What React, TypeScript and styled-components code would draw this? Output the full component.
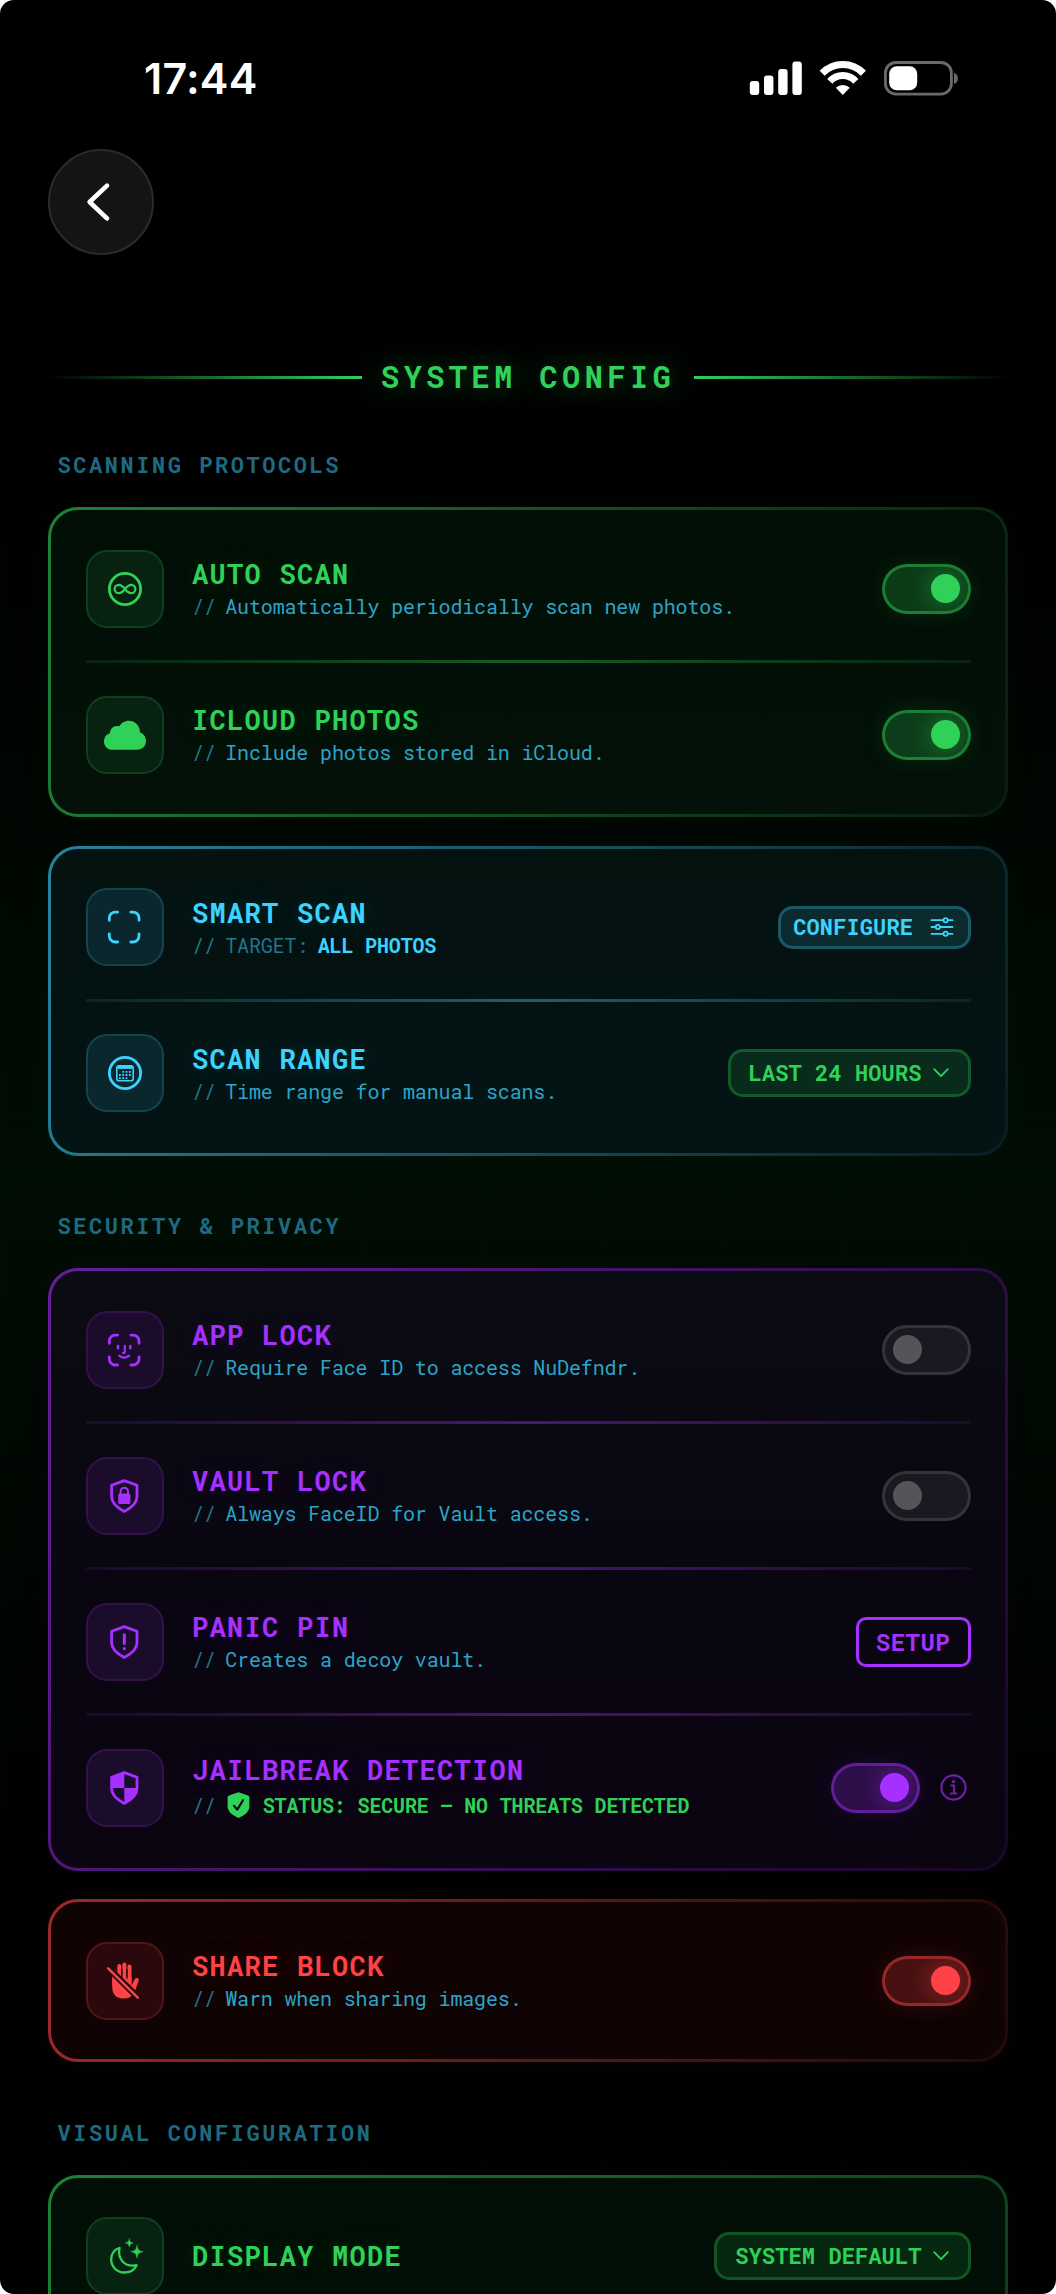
import React from "react";
import styled, { createGlobalStyle } from "styled-components";

type Tone = "green" | "cyan" | "purple" | "red";

interface Palette {
  ink: string;
  rgb: string;
  fill: string;
  tile: string;
  tileEdge: string;
}

const tones: Record<Tone, Palette> = {
  green: {
    ink: "#30d158",
    rgb: "48, 209, 88",
    fill: "linear-gradient(180deg, #010e05, #031108)",
    tile: "#072210",
    tileEdge: "#0e3f1e",
  },
  cyan: {
    ink: "#3cd3fe",
    rgb: "60, 211, 254",
    fill: "linear-gradient(180deg, #03120f, #031415)",
    tile: "#0a272d",
    tileEdge: "#144450",
  },
  purple: {
    ink: "#a530ff",
    rgb: "165, 48, 255",
    fill: "linear-gradient(180deg, #0b0c13, #090611 50%, #0b0411)",
    tile: "#1b0c2b",
    tileEdge: "#331149",
  },
  red: {
    ink: "#ff4245",
    rgb: "255, 66, 69",
    fill: "linear-gradient(180deg, #100303, #100303)",
    tile: "#2b080b",
    tileEdge: "#541518",
  },
};

const mono = `"Roboto Mono", "Liberation Mono", "DejaVu Sans Mono", monospace`;

const GlobalStyle = createGlobalStyle`
  *, *::before, *::after { box-sizing: border-box; }
  html, body { margin: 0; padding: 0; background: #fff; }
`;

const Screen = styled.main`
  width: 1056px;
  height: 2294px;
  overflow: hidden;
  border-radius: 14px;
  padding: 0 48px;
  font-family: ${mono};
  background:
    repeating-linear-gradient(90deg, rgba(48, 209, 88, 0.012) 0 1px, transparent 1px 120px),
    repeating-linear-gradient(180deg, rgba(48, 209, 88, 0.012) 0 1px, transparent 1px 120px) 0 38px,
    linear-gradient(180deg, #000 0, #000 500px, #000d03 1180px, #000b03 1290px, #000 1850px);
`;

const StatusBar = styled.header`
  height: 148.5px;
  padding: 7px 49.5px 0 96px;
  display: flex;
  align-items: center;
  justify-content: space-between;
  color: #fff;
`;

const Clock = styled.span`
  font-family: Inter, "Liberation Sans", sans-serif;
  font-weight: 600;
  font-size: 43px;
  letter-spacing: 0.2px;
`;

const BackButton = styled.button`
  display: flex;
  align-items: center;
  justify-content: center;
  width: 106px;
  height: 106px;
  padding: 0 6px 0 0;
  border-radius: 50%;
  border: 2px solid #2b2b2f;
  background: #141414;
`;

const TitleRow = styled.div`
  display: flex;
  align-items: center;
  height: 30.5px;
  margin: 106.5px 0 3px;
`;

const Rule = styled.span<{ $side: "left" | "right" }>`
  flex: 1;
  height: 3px;
  margin-top: 2px;
  background: linear-gradient(to ${(p) => p.$side}, #30d158, transparent);
`;

const PageTitle = styled.h1`
  margin: 0;
  padding: 0 18.5px 0 18.5px;
  font-size: 30.5px;
  line-height: 30px;
  font-weight: 700;
  letter-spacing: 4.35px;
  color: #30d158;
  text-shadow: 0 0 30px rgba(48, 209, 88, 0.5);
`;

const SectionLabel = styled.h2`
  margin: 0;
  padding: 55.5px 0 27px 9.5px;
  font-size: 22px;
  line-height: 30px;
  font-weight: 700;
  letter-spacing: 2.55px;
  color: #1e6a80;
`;

const Card = styled.section<{ $tone: Tone; $angle: number; $height: number }>`
  display: flex;
  flex-direction: column;
  gap: 32.3px;
  height: ${(p) => p.$height}px;
  padding: 39.3px 34.5px 39px 35px;
  border: 3px solid transparent;
  border-radius: 30px;
  background:
    ${(p) => tones[p.$tone].fill} padding-box,
    linear-gradient(
        ${(p) => p.$angle}deg,
        rgba(${(p) => tones[p.$tone].rgb}, 0.62),
        rgba(${(p) => tones[p.$tone].rgb}, 0.14)
      )
      border-box,
    #000 border-box;
  box-shadow: 0 0 30px rgba(${(p) => tones[p.$tone].rgb}, 0.04);

  & + & {
    margin-top: 28.5px;
  }
`;

const Divider = styled.hr<{ $tone: Tone }>`
  flex: none;
  width: 100%;
  height: 3px;
  margin: 0;
  border: 0;
  background: linear-gradient(
    90deg,
    rgba(${(p) => tones[p.$tone].rgb}, 0.1),
    rgba(${(p) => tones[p.$tone].rgb}, 0.4) 50%,
    rgba(${(p) => tones[p.$tone].rgb}, 0.1)
  );
`;

const Row = styled.div`
  display: flex;
  align-items: center;
  flex: none;
  height: 78.5px;
`;

const Tile = styled.span<{ $tone: Tone }>`
  display: flex;
  align-items: center;
  justify-content: center;
  flex: none;
  width: 78px;
  height: 78px;
  margin-right: 28px;
  border-radius: 21px;
  border: 2px solid ${(p) => tones[p.$tone].tileEdge};
  background: ${(p) => tones[p.$tone].tile};
  color: ${(p) => tones[p.$tone].ink};
`;

const Copy = styled.div<{ $drop: number }>`
  flex: 1;
  margin-top: ${(p) => p.$drop}px;
`;

const RowTitle = styled.h3<{ $tone: Tone }>`
  margin: 0;
  font-size: 27px;
  line-height: 33px;
  font-weight: 700;
  letter-spacing: 1.3px;
  color: ${(p) => tones[p.$tone].ink};
  text-shadow: 0 0 24px rgba(${(p) => tones[p.$tone].rgb}, 0.2);
`;

const Note = styled.p<{ $height?: number }>`
  display: flex;
  align-items: center;
  gap: 9.5px;
  height: ${(p) => p.$height ?? 33}px;
  margin: 0;
  font-size: 20px;
  line-height: 33px;
  letter-spacing: -0.15px;
  white-space: nowrap;
  color: #2ca5c8;
`;

const Dim = styled.span`
  color: #21788c;
`;

const Strong = styled.b<{ $tone: Tone }>`
  font-weight: 700;
  color: ${(p) => tones[p.$tone].ink};
`;

const Switch = styled.button<{ $tone: Tone; $on: boolean }>`
  display: flex;
  align-items: center;
  justify-content: ${(p) => (p.$on ? "flex-end" : "flex-start")};
  flex: none;
  width: 88.5px;
  height: 50px;
  padding: 0 7.5px;
  border-radius: 25px;
  border: 3px solid ${(p) => (p.$on ? `rgba(${tones[p.$tone].rgb}, 0.45)` : "#343338")};
  background: ${(p) => (p.$on ? `rgba(${tones[p.$tone].rgb}, 0.23)` : "#1a1820")};
  box-shadow: ${(p) => (p.$on ? `0 0 24px rgba(${tones[p.$tone].rgb}, 0.12)` : "none")};
  overflow: hidden;
`;

const Knob = styled.span<{ $tone: Tone; $on: boolean }>`
  width: 29px;
  height: 29px;
  border-radius: 50%;
  background: ${(p) => (p.$on ? tones[p.$tone].ink : "#565459")};
  box-shadow: ${(p) => (p.$on ? `0 0 24px rgba(${tones[p.$tone].rgb}, 0.5)` : "none")};
`;

const Pill = styled.button<{ $tone: Tone; $height: number; $pad: string; $gap: number }>`
  display: flex;
  align-items: center;
  gap: ${(p) => p.$gap}px;
  height: ${(p) => p.$height}px;
  padding: ${(p) => p.$pad};
  border-radius: 15px;
  border: 3px solid rgba(${(p) => tones[p.$tone].rgb}, 0.28);
  background: rgba(${(p) => tones[p.$tone].rgb}, 0.13);
  color: ${(p) => tones[p.$tone].ink};
  font-family: ${mono};
  font-weight: 700;
  font-size: 22px;
  line-height: 30px;
  letter-spacing: 0.1px;
  white-space: nowrap;
`;

const OutlineButton = styled.button`
  width: 115px;
  height: 50px;
  padding: 0;
  border-radius: 10px;
  border: 3px solid #a530ff;
  background: transparent;
  color: #a530ff;
  font-family: ${mono};
  font-weight: 700;
  font-size: 24px;
  letter-spacing: 0.5px;
`;

const Info = styled.span`
  display: flex;
  margin: 0 4px 0 20px;
  color: #6d22a6;
`;

const StatusBadge = styled.span`
  display: flex;
  margin: 0 3px 0 2px;
`;

const Svg48: React.FC<{ children: React.ReactNode }> = ({ children }) => (
  <svg
    width="48"
    height="48"
    viewBox="0 0 48 48"
    fill="none"
    stroke="currentColor"
    strokeWidth="2.8"
    strokeLinecap="round"
    strokeLinejoin="round"
  >
    {children}
  </svg>
);

const InfinityIcon = () => (
  <Svg48>
    <circle cx="24" cy="24" r="15.6" />
    <path
      strokeWidth="2.2"
      d="M24 24C21.4 20.6 19.8 19.8 17.8 19.8A4.2 4.2 0 0 0 17.8 28.2C19.8 28.2 21.4 27.4 24 24C26.6 20.6 28.2 19.8 30.2 19.8A4.2 4.2 0 0 1 30.2 28.2C28.2 28.2 26.6 27.4 24 24Z"
    />
  </Svg48>
);

const CloudIcon = () => (
  <Svg48>
    <path
      fill="currentColor"
      stroke="none"
      d="M12 38.7C6.6 38.7 3 35 3 30.4C3 26.2 5.6 23.2 9 22.3C8.8 18 12.3 14.6 16.2 14.9C17 14.9 17.7 15 18.4 15.3C20.2 11.9 23.8 9.7 27.8 9.7C34 9.7 39 14.6 39.2 21.6C42.8 22.9 45 26.2 45 29.9C45 34.8 41.1 38.7 36.2 38.7Z"
    />
  </Svg48>
);

const Corners = () => (
  <path d="M8.3 17.3V15.1a6 6 0 0 1 6-6H16.6M29.8 9.1h2.2a6 6 0 0 1 6 6V17.3M38 30.8v2.2a6 6 0 0 1-6 6H29.8M16.6 39h-2.3a6 6 0 0 1-6-6V30.8" />
);

const ViewfinderIcon = () => (
  <Svg48>
    <Corners />
  </Svg48>
);

const CalendarIcon = () => (
  <Svg48>
    <circle cx="24" cy="24" r="15.6" />
    <rect x="15.8" y="16.8" width="16.4" height="15" rx="2.4" strokeWidth="1.6" />
    <path d="M16.6 18.2H31.4" strokeWidth="3.4" strokeLinecap="butt" />
    <path
      strokeWidth="1.8"
      strokeLinecap="butt"
      strokeDasharray="1.8 1.5"
      d="M21.3 22.9H30M18 26H30M18 29.1H26.5"
    />
  </Svg48>
);

const FaceIcon = () => (
  <Svg48>
    <Corners />
    <path strokeWidth="2.5" d="M17 20V22.2M29.3 20V22.2" />
    <path strokeWidth="2.1" d="M23.8 19.8V25.4Q23.8 27 22 27M18.2 29.6Q23.2 33.6 28.2 29.6" />
  </Svg48>
);

const shield = "M23.3 8.6L36 13.2V24.6C36 31.3 30.6 35.8 23.3 39.4C16 35.8 10.6 31.3 10.6 24.6V13.2Z";

const ShieldLockIcon = () => (
  <Svg48>
    <path d={shield} />
    <rect x="17.2" y="21.6" width="12.2" height="10.4" rx="1.6" fill="currentColor" stroke="none" />
    <path strokeWidth="2" d="M19.6 22V19.4a3.7 3.7 0 0 1 7.4 0V22" />
  </Svg48>
);

const ShieldAlertIcon = () => (
  <Svg48>
    <path d={shield} />
    <path strokeWidth="3" d="M23.3 16.8V25.4M23.3 30.6V30.8" />
  </Svg48>
);

const ShieldCheckerIcon = () => (
  <Svg48>
    <path d={shield} />
    <path
      fill="currentColor"
      stroke="none"
      d="M23.3 8.6V24H10.6V13.2ZM23.3 24H36C36 31.3 30.6 35.8 23.3 39.4Z"
    />
  </Svg48>
);

const HandSlashIcon = () => (
  <Svg48>
    <path strokeWidth="4" d="M13.3 15V28M18.3 9V25M23.4 7.6V25M28.5 9.6V25" />
    <path
      fill="currentColor"
      stroke="none"
      d="M11.3 20H30.5V28.4L33.8 22.2C34.8 20.2 38.4 20.5 37.7 23.4L34.4 33C32.6 38.5 28.8 41.5 23 41.5C15.6 41.5 11.3 37.4 11.3 30.4Z"
    />
    <path stroke={tones.red.tile} strokeWidth="1.1" strokeLinecap="butt" d="M20.8 12V22M26 12V22" />
    <path stroke={tones.red.tile} strokeWidth="6.4" d="M7 10.8L37.2 40.6" />
    <path strokeWidth="2.5" d="M7.2 11.4L36.8 40.6" />
  </Svg48>
);

const MoonStarsIcon = () => (
  <Svg48>
    <path
      strokeWidth="2.3"
      d="M18.6 15.8C13 17.6 10.2 22.4 10.2 27.5A13 13 0 0 0 23.2 40.5C29 40.5 33.6 37.6 35.6 33.2C24 35.4 16 27.6 18.6 15.8Z"
    />
    <path
      fill="currentColor"
      stroke="currentColor"
      strokeWidth="0.5"
      d="M28.3 7C28.9 9.8 29.4 10.3 32.2 11C29.4 11.7 28.9 12.2 28.3 15C27.7 12.2 27.2 11.7 24.4 11C27.2 10.3 27.7 9.8 28.3 7ZM36 13.4C36.8 17.9 37.7 18.8 42.2 19.7C37.7 20.6 36.8 21.5 36 26C35.2 21.5 34.3 20.6 29.8 19.7C34.3 18.8 35.2 17.9 36 13.4Z"
    />
  </Svg48>
);

const SlidersIcon = () => (
  <svg width="24" height="22" viewBox="0 0 24 22" fill="none" stroke="currentColor" strokeWidth="1.8" strokeLinecap="round">
    <path d="M1.5 4.2H13.4M17.8 4.2H22.5M1.5 11H5.6M10 11H22.5M1.5 17.8H13.4M17.8 17.8H22.5" />
    <circle cx="15.6" cy="4.2" r="2.1" />
    <circle cx="7.8" cy="11" r="2.1" />
    <circle cx="15.6" cy="17.8" r="2.1" />
  </svg>
);

const ChevronDown = () => (
  <svg width="16" height="10" viewBox="0 0 16 10" fill="none" stroke="currentColor" strokeWidth="1.8" strokeLinecap="round" strokeLinejoin="round">
    <path d="M1.2 1.2L8 8.2L14.8 1.2" />
  </svg>
);

const ShieldCheckIcon = () => (
  <svg width="23" height="26" viewBox="0 0 23 26">
    <path
      fill="#30d158"
      d="M11.5 0.2L21 3.4Q22.4 4 22.4 5.4V14C22.4 19.4 18.4 23 11.5 25.9C4.6 23 0.6 19.4 0.6 14V5.4Q0.6 4 2 3.4Z"
    />
    <path fill="none" stroke="#0a0411" strokeWidth="2.1" strokeLinecap="round" strokeLinejoin="round" d="M7 13.8L10.2 17.6L16 8.2" />
  </svg>
);

const InfoIcon = () => (
  <svg width="27" height="27" viewBox="0 0 27 27" fill="none" stroke="currentColor" strokeWidth="2.1">
    <circle cx="13.5" cy="13.5" r="12.1" />
    <path strokeWidth="2" d="M10.6 11.6H14V19.4M10 19.6H17.2" />
    <circle cx="13.6" cy="7.6" r="1.7" fill="currentColor" stroke="none" />
  </svg>
);

const StatusGlyphs = () => (
  <svg width="210" height="36" viewBox="0 0 210 36" fill="#fff">
    <rect x="0.8" y="21" width="9.4" height="14" rx="3" />
    <rect x="15" y="15.4" width="9.4" height="19.6" rx="3" />
    <rect x="29.2" y="9" width="9.4" height="26" rx="3" />
    <rect x="43.4" y="1.4" width="9.4" height="33.6" rx="3" />
    <g fill="none" stroke="#fff" strokeWidth="7">
      <path d="M73.2 13.2A28.6 28.6 0 0 1 114.4 13.2" />
      <path d="M80.8 21.4A17.4 17.4 0 0 1 106.8 21.4" />
    </g>
    <path d="M93.8 35L86.8 27.8A10 10 0 0 1 100.8 27.8Z" />
    <rect x="136.4" y="2.5" width="66" height="31.6" rx="10.5" fill="none" stroke="#6a6a6a" strokeWidth="2.8" />
    <rect x="140.2" y="6.3" width="28" height="24" rx="7.5" />
    <path d="M205 12.8A6 6 0 0 1 205 24Z" fill="#6a6a6a" />
  </svg>
);

interface ItemProps {
  tone: Tone;
  icon: React.ReactNode;
  title: string;
  note?: React.ReactNode;
  drop?: number;
  noteHeight?: number;
  children: React.ReactNode;
}

const Item: React.FC<ItemProps> = ({ tone, icon, title, note, drop = 3, noteHeight, children }) => (
  <Row>
    <Tile $tone={tone}>{icon}</Tile>
    <Copy $drop={drop}>
      <RowTitle $tone={tone}>{title}</RowTitle>
      {note && (
        <Note $height={noteHeight}>
          <Dim>//</Dim>
          {note}
        </Note>
      )}
    </Copy>
    {children}
  </Row>
);

const Toggle: React.FC<{ tone: Tone; on: boolean }> = ({ tone, on }) => (
  <Switch type="button" role="switch" aria-checked={on} $tone={tone} $on={on}>
    <Knob $tone={tone} $on={on} />
  </Switch>
);

export default function App() {
  return (
    <>
      <GlobalStyle />
      <Screen>
        <StatusBar>
          <Clock>17:44</Clock>
          <StatusGlyphs />
        </StatusBar>
        <BackButton type="button" aria-label="Back">
          <svg width="26" height="42" viewBox="0 0 26 42" fill="none" stroke="#fff" strokeWidth="4.6" strokeLinecap="round" strokeLinejoin="round">
            <path d="M22 4.6L4.6 21L22 37.4" />
          </svg>
        </BackButton>

        <TitleRow>
          <Rule $side="left" />
          <PageTitle>SYSTEM CONFIG</PageTitle>
          <Rule $side="right" />
        </TitleRow>

        <SectionLabel>SCANNING PROTOCOLS</SectionLabel>
        <Card $tone="green" $angle={107.9} $height={310}>
          <Item tone="green" icon={<InfinityIcon />} title="AUTO SCAN" note="Automatically periodically scan new photos.">
            <Toggle tone="green" on />
          </Item>
          <Divider $tone="green" />
          <Item tone="green" icon={<CloudIcon />} title="ICLOUD PHOTOS" note="Include photos stored in iCloud.">
            <Toggle tone="green" on />
          </Item>
        </Card>
        <Card $tone="cyan" $angle={107.9} $height={310}>
          <Item
            tone="cyan"
            icon={<ViewfinderIcon />}
            title="SMART SCAN"
            note={
              <>
                <Dim>TARGET:</Dim>
                <Strong $tone="cyan">ALL PHOTOS</Strong>
              </>
            }
          >
            <Pill type="button" $tone="cyan" $height={43} $pad="0 13.5px 0 12px" $gap={17}>
              CONFIGURE
              <SlidersIcon />
            </Pill>
          </Item>
          <Divider $tone="cyan" />
          <Item tone="cyan" icon={<CalendarIcon />} title="SCAN RANGE" note="Time range for manual scans.">
            <Pill type="button" $tone="green" $height={48} $pad="0 19px 0 17.5px" $gap={11}>
              LAST 24 HOURS
              <ChevronDown />
            </Pill>
          </Item>
        </Card>

        <SectionLabel>SECURITY &amp; PRIVACY</SectionLabel>
        <Card $tone="purple" $angle={122.1} $height={602.5}>
          <Item tone="purple" icon={<FaceIcon />} title="APP LOCK" note="Require Face ID to access NuDefndr.">
            <Toggle tone="purple" on={false} />
          </Item>
          <Divider $tone="purple" />
          <Item tone="purple" icon={<ShieldLockIcon />} title="VAULT LOCK" note="Always FaceID for Vault access.">
            <Toggle tone="purple" on={false} />
          </Item>
          <Divider $tone="purple" />
          <Item tone="purple" icon={<ShieldAlertIcon />} title="PANIC PIN" note="Creates a decoy vault.">
            <OutlineButton type="button">SETUP</OutlineButton>
          </Item>
          <Divider $tone="purple" />
          <Item
            tone="purple"
            icon={<ShieldCheckerIcon />}
            title="JAILBREAK DETECTION"
            drop={2}
            noteHeight={39}
            note={
              <>
                <StatusBadge>
                  <ShieldCheckIcon />
                </StatusBadge>
                <Strong $tone="green">STATUS: SECURE – NO THREATS DETECTED</Strong>
              </>
            }
          >
            <Toggle tone="purple" on />
            <Info>
              <InfoIcon />
            </Info>
          </Item>
        </Card>
        <Card $tone="red" $angle={99.6} $height={163}>
          <Item tone="red" icon={<HandSlashIcon />} title="SHARE BLOCK" note="Warn when sharing images.">
            <Toggle tone="red" on />
          </Item>
        </Card>

        <SectionLabel>VISUAL CONFIGURATION</SectionLabel>
        <Card $tone="green" $angle={130} $height={740}>
          <Item tone="green" icon={<MoonStarsIcon />} title="DISPLAY MODE" drop={-2}>
            <Pill type="button" $tone="green" $height={48} $pad="0 19px 0 18px" $gap={11}>
              SYSTEM DEFAULT
              <ChevronDown />
            </Pill>
          </Item>
        </Card>
      </Screen>
    </>
  );
}
